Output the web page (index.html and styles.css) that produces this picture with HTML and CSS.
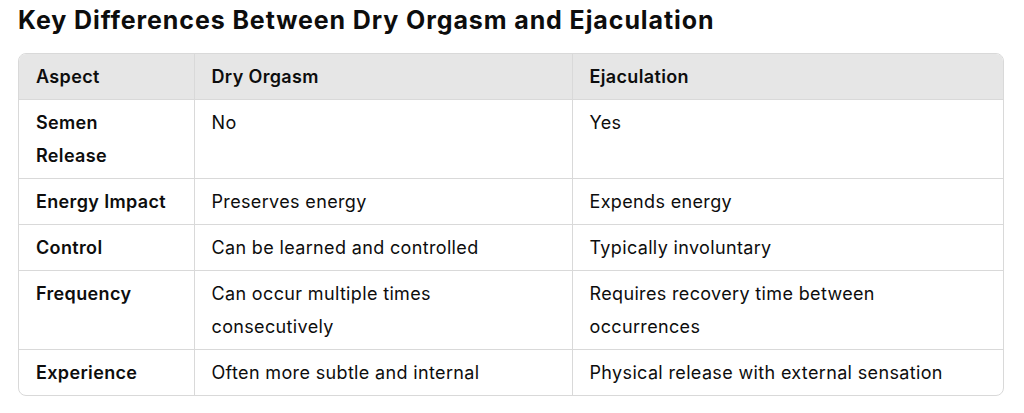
FILE: index.html
```html
<!DOCTYPE html>
<html lang="en">
<head>
<meta charset="utf-8">
<title>Key Differences</title>
<link rel="stylesheet" href="styles.css">
</head>
<body>
<main class="page">
  <h3 class="title">Key Differences Between Dry Orgasm and Ejaculation</h3>
  <div class="table-wrap">
    <table class="cmp">
      <colgroup>
        <col class="c1"><col class="c2"><col class="c3">
      </colgroup>
      <thead>
        <tr><th>Aspect</th><th>Dry Orgasm</th><th>Ejaculation</th></tr>
      </thead>
      <tbody>
        <tr><td class="k">Semen Release</td><td>No</td><td>Yes</td></tr>
        <tr><td class="k">Energy Impact</td><td>Preserves energy</td><td>Expends energy</td></tr>
        <tr><td class="k">Control</td><td>Can be learned and controlled</td><td>Typically involuntary</td></tr>
        <tr><td class="k">Frequency</td><td>Can occur multiple times consecutively</td><td>Requires recovery time between occurrences</td></tr>
        <tr><td class="k">Experience</td><td>Often more subtle and internal</td><td>Physical release with external sensation</td></tr>
      </tbody>
    </table>
  </div>
</main>
</body>
</html>
```
FILE: styles.css
```css
* { box-sizing: border-box; }
html, body { margin: 0; padding: 0; background: #fff; }
body {
  font-family: Inter, "Noto Sans", "Liberation Sans", sans-serif;
  color: #0d0d0d;
}
.page { padding: 5px 18px 0 18px; width: 1024px; }
.title {
  margin: 0 0 18px 0;
  font-size: 25px;
  font-weight: 700;
  line-height: 30px;
  letter-spacing: 0.9px;
}
.table-wrap {
  width: 986px;
  border: 1px solid #d9d9d9;
  border-radius: 8px;
  overflow: hidden;
}
.cmp {
  width: 100%;
  border-collapse: collapse;
  table-layout: fixed;
  font-size: 18px;
  line-height: 33px;
  letter-spacing: 0.35px;
}
.c1 { width: 175px; }
.c2 { width: 378px; }
.c3 { width: auto; }
.cmp th, .cmp td {
  text-align: left;
  vertical-align: top;
  padding: 6px 18px 6px 17px;
  border-left: 1px solid #d9d9d9;
  border-top: 1px solid #d9d9d9;
}
.cmp th:first-child, .cmp td:first-child { border-left: none; padding-right: 24px; }
.cmp thead th {
  border-top: none;
  background: #e6e6e6;
  font-weight: 600;
}
.cmp td.k { font-weight: 600; }
```
